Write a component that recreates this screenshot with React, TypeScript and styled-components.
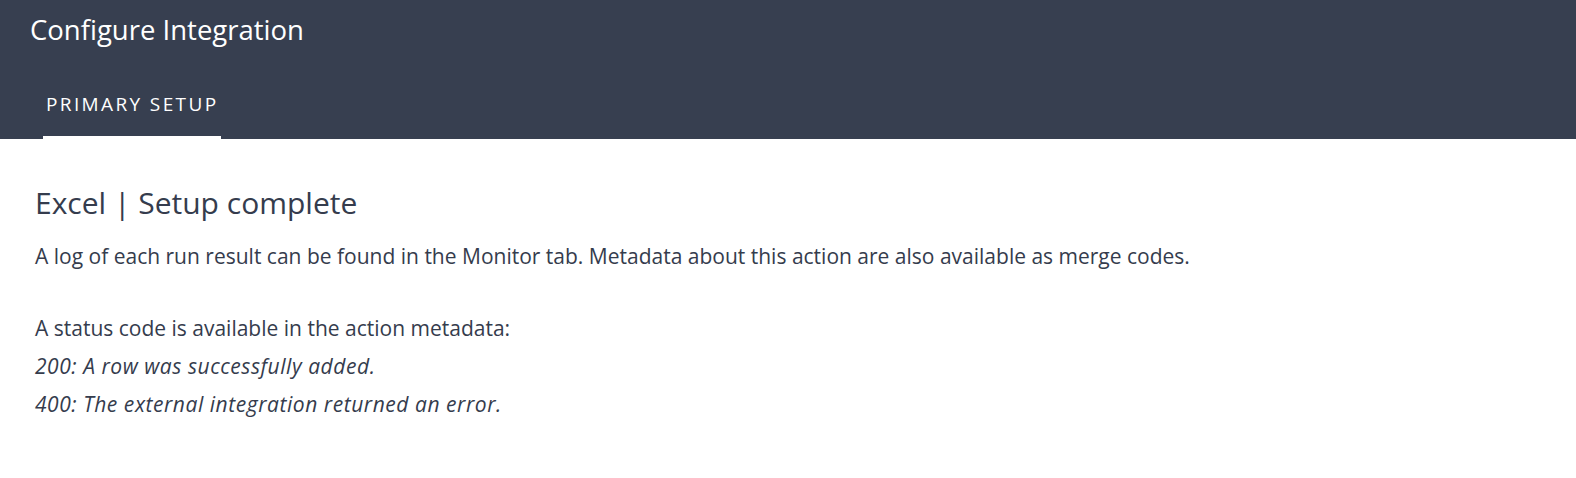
import styled, { createGlobalStyle } from "styled-components";

const GlobalStyle = createGlobalStyle`
  body {
    margin: 0;
    background: #ffffff;
    font-family: "Open Sans", "Lato", sans-serif;
    color: #353c4d;
  }
`;

const codes = [
  "200: A row was successfully added.",
  "400: The external integration returned an error.",
];

export default function App() {
  return (
    <>
      <GlobalStyle />
      <Header>
        <Title>Configure Integration</Title>
        <Tabs>
          <Tab $active>PRIMARY SETUP</Tab>
        </Tabs>
      </Header>
      <Content>
        <Heading>Excel | Setup complete</Heading>
        <Text>
          A log of each run result can be found in the Monitor tab. Metadata
          about this action are also available as merge codes.
        </Text>
        <Status>
          <Line>A status code is available in the action metadata:</Line>
          {codes.map((code) => (
            <Line key={code} $italic>
              {code}
            </Line>
          ))}
        </Status>
      </Content>
    </>
  );
}

const Header = styled.header`
  background-color: #373f50;
  height: 139px;
  display: flex;
  flex-direction: column;
  justify-content: space-between;
  box-sizing: border-box;
  padding: 12px 30px 0 30px;
`;

const Title = styled.h1`
  margin: 0;
  color: #ffffff;
  font-size: 27.5px;
  font-weight: 400;
  line-height: 36px;
`;

const Tabs = styled.nav`
  display: flex;
  padding-left: 13px;
`;

const Tab = styled.div<{ $active?: boolean }>`
  color: #ffffff;
  font-size: 19px;
  font-weight: 500;
  letter-spacing: 0.125em;
  padding: 0 3px 20px 3px;
  line-height: 24px;
  border-bottom: 3px solid ${(p) => (p.$active ? "#ffffff" : "transparent")};
`;

const Content = styled.main`
  padding: 44px 35px 0 35px;
`;

const Heading = styled.h2`
  margin: 0 0 14px 0;
  font-size: 30px;
  font-weight: 400;
  line-height: 40px;
  color: #353c4d;
`;

const Text = styled.p`
  margin: 0 0 34px 0;
  font-size: 21px;
  line-height: 38px;
`;

const Status = styled.div`
  display: flex;
  flex-direction: column;
`;

const Line = styled.div<{ $italic?: boolean }>`
  font-size: 21px;
  line-height: 38px;
  font-style: ${(p) => (p.$italic ? "italic" : "normal")};
  letter-spacing: ${(p) => (p.$italic ? "0.55px" : "normal")};
`;
